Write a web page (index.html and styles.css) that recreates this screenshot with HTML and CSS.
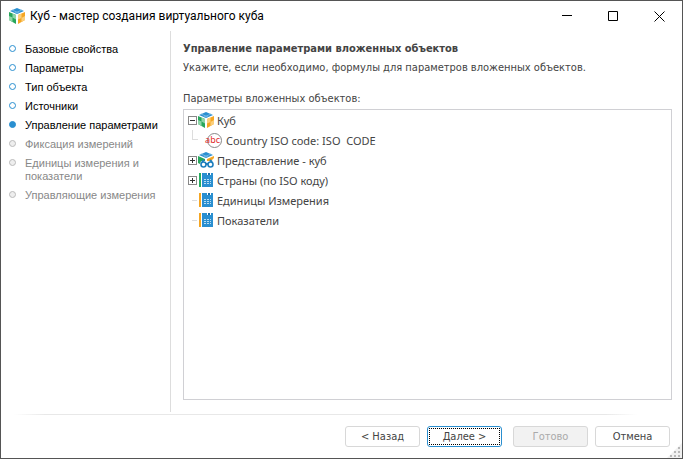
FILE: index.html
```html
<!DOCTYPE html>
<html lang="ru">
<head>
  <meta charset="UTF-8">
  <title>Куб - мастер создания виртуального куба</title>
  <link rel="stylesheet" href="styles.css">
</head>
<body>

  <!-- Общие значки -->
  <svg class="sprite" aria-hidden="true">
    <symbol id="cube" viewBox="0 0 16 16">
      <path d="M8 0L15 3L8 6L1 3Z" fill="#2a8fd0"/>
      <path d="M3 2L10 5M13 2L6 5" stroke="#6fb6e2" fill="none"/>
      <path d="M0 4L7 7V16L0 12Z" fill="#27a65a"/>
      <path d="M0 8L3.500 9.500V14L0 12ZM3.500 5.500L7 7V11.500L3.500 9.500Z" fill="#8fd6a8"/>
      <path d="M16 4L9 7V16L16 12Z" fill="#f5a623"/>
      <path d="M9 7L12.500 5.500V10L9 11.500ZM12.500 10L16 8V12L12.500 14Z" fill="#fbcf7c"/>
    </symbol>
    <symbol id="view" viewBox="0 0 16 16">
      <path d="M8 0L15 3L8 6L1 3Z" fill="#2a8fd0"/>
      <path d="M3 2L10 5M13 2L6 5" stroke="#6fb6e2" fill="none"/>
      <path d="M0 4L7 7V9H3L2 12L0 11Z" fill="#27a65a"/>
      <path d="M16 4L9 7V9H13L14 8L16 6Z" fill="#f5a623"/>
      <path d="M4 10L6 8M14 10L12 8M8 12H10" stroke="#1f7fbd" stroke-width="2" fill="none"/>
      <circle cx="5.500" cy="12.500" r="2.500" fill="#fff" stroke="#1f7fbd" stroke-width="1.600"/>
      <circle cx="12.500" cy="12.500" r="2.500" fill="#fff" stroke="#1f7fbd" stroke-width="1.600"/>
    </symbol>
    <symbol id="dict" viewBox="0 0 16 16">
      <path d="M1 1H3V15H1Z" fill="currentColor"/>
      <path d="M4 1H9V3H10V1H12V3H13V1H15V15H4Z" fill="#2a8fd0"/>
      <path d="M10 1H12V3H10Z" fill="#1c6fa8"/>
      <path d="M6 7.500H8M9 7.500H11M12 7.500H13M6 9.500H8M9 9.500H11M12 9.500H13M6 11.500H8M9 11.500H11M12 11.500H13" stroke="#b8dcf2" fill="none"/>
    </symbol>
  </svg>

  <div class="window">
    <header class="titlebar">
      <svg class="logo"><use href="#cube"/></svg>
      <h1>Куб - мастер создания виртуального куба</h1>
      <button class="win-btn" aria-label="Свернуть"><svg class="win-icon" viewBox="0 0 11 11"><path d="M0 4.500H10"/></svg></button>
      <button class="win-btn" aria-label="Развернуть"><svg class="win-icon" viewBox="0 0 11 11"><path d="M0.500 0.500H9.500V9.500H0.500Z"/></svg></button>
      <button class="win-btn" aria-label="Закрыть"><svg class="win-icon" viewBox="0 0 11 11"><path d="M0.500 0.500L10.500 10.500M10.500 0.500L0.500 10.500"/></svg></button>
    </header>

    <div class="content">
      <nav class="steps">
        <a href="#" class="step">Базовые свойства</a>
        <a href="#" class="step">Параметры</a>
        <a href="#" class="step">Тип объекта</a>
        <a href="#" class="step">Источники</a>
        <a href="#" class="step current" aria-current="step">Управление параметрами</a>
        <a class="step off">Фиксация измерений</a>
        <a class="step off">Единицы измерения и показатели</a>
        <a class="step off">Управляющие измерения</a>
      </nav>

      <main>
        <h2>Управление параметрами вложенных объектов</h2>
        <p class="hint">Укажите, если необходимо, формулы для параметров вложенных объектов.</p>
        <p class="caption" id="tree-label">Параметры вложенных объектов:</p>

        <ul class="tree" role="tree" aria-labelledby="tree-label">
          <li class="node" role="treeitem" aria-expanded="true">
            <button class="toggle" aria-label="Свернуть Куб"><svg viewBox="0 0 9 9"><path d="M2 4.500H7"/></svg></button>
            <svg class="icon"><use href="#cube"/></svg>
            <span>Куб</span>
          </li>
          <li class="node child" role="treeitem">
            <span class="elbow"></span>
            <span class="abc">abc</span>
            <span>Country ISO code: ISO&nbsp; CODE</span>
          </li>
          <li class="node" role="treeitem" aria-expanded="false">
            <button class="toggle" aria-label="Развернуть Представление"><svg viewBox="0 0 9 9"><path d="M2 4.500H7M4.500 2V7"/></svg></button>
            <svg class="icon"><use href="#view"/></svg>
            <span>Представление - куб</span>
          </li>
          <li class="node" role="treeitem" aria-expanded="false">
            <button class="toggle" aria-label="Развернуть Страны"><svg viewBox="0 0 9 9"><path d="M2 4.500H7M4.500 2V7"/></svg></button>
            <svg class="icon green"><use href="#dict"/></svg>
            <span>Страны (по ISO коду)</span>
          </li>
          <li class="node" role="treeitem">
            <span class="dash"></span>
            <svg class="icon orange"><use href="#dict"/></svg>
            <span>Единицы Измерения</span>
          </li>
          <li class="node" role="treeitem">
            <span class="dash"></span>
            <svg class="icon orange"><use href="#dict"/></svg>
            <span>Показатели</span>
          </li>
        </ul>
      </main>
    </div>

    <footer>
      <div class="line"></div>
      <div class="buttons">
        <button class="btn">&lt; Назад</button>
        <button class="btn primary"><span>Далее &gt;</span></button>
        <button class="btn finish" disabled>Готово</button>
        <button class="btn">Отмена</button>
      </div>
      <svg class="grip" viewBox="0 0 15 15">
        <path d="M15 0V15H0Z" fill="#f0f0f0"/>
        <path d="M11 4h2v2h-2zM7 8h2v2h-2zM11 8h2v2h-2zM3 12h2v2h-2zM7 12h2v2h-2zM11 12h2v2h-2z" fill="#b8b8b8"/>
      </svg>
    </footer>
  </div>

</body>
</html>
```

FILE: styles.css
```css
* {
  box-sizing: border-box;
}

body {
  margin: 0;
  font-family: "DejaVu Sans Condensed", "DejaVu Sans", sans-serif;
  font-size: 11px;
  color: #444;
  background: #fff;
}

h1, h2, p, ul {
  margin: 0;
  padding: 0;
}

button {
  font: inherit;
  color: inherit;
  padding: 0;
}

.sprite {
  display: none;
}

.window {
  display: flex;
  flex-direction: column;
  min-height: 100vh;
  border: 1px solid #555;
  position: relative;
}

/* Заголовок окна */
.titlebar {
  display: flex;
  align-items: center;
  height: 30px;
  padding-left: 8px;
}

.logo {
  width: 16px;
  height: 16px;
  margin-right: 5px;
}

.titlebar h1 {
  flex: 1;
  font-family: Roboto, sans-serif;
  font-size: 12px;
  font-weight: normal;
  color: #000;
}

.win-btn {
  display: flex;
  align-items: center;
  justify-content: center;
  width: 46px;
  height: 30px;
  border: none;
  background: none;
}

.win-icon {
  width: 11px;
  height: 11px;
  fill: none;
  stroke: #000;
}

.content {
  flex: 1;
  display: flex;
}

/* Шаги мастера */
.steps {
  display: flex;
  flex-direction: column;
  gap: 6px;
  width: 170px;
  padding: 12px 8px;
  border-right: 1px solid #ddd;
  font-family: "Liberation Sans", Arial, sans-serif;
  line-height: 13px;
}

.step {
  display: flex;
  gap: 9px;
  color: #000;
  text-decoration: none;
}

.step::before {
  content: "";
  box-sizing: border-box;
  flex: none;
  width: 7px;
  height: 7px;
  margin-top: 2px;
  border: 1px solid #2a8fd0;
  border-radius: 50%;
}

.current::before {
  background: #2a8fd0;
}

.off {
  color: #888;
}

.off::before {
  border-color: #bbb;
  background: #eee;
}

main {
  flex: 1;
  display: flex;
  flex-direction: column;
  padding: 8px 10px 12px 12px;
}

h2 {
  font-size: 11px;
  line-height: 20px;
}

.hint {
  line-height: 18px;
}

.caption {
  margin-top: 12px;
  line-height: 20px;
}

/* Дерево параметров */
.tree {
  flex: 1;
  padding: 0 4px;
  border: 1px solid #d0d0d4;
  list-style: none;
  font-family: "Noto Sans", sans-serif;
}

.node {
  display: flex;
  align-items: center;
  height: 20px;
}

.toggle {
  display: flex;
  width: 9px;
  height: 9px;
  border: 1px solid #888;
  background: #fff;
}

.toggle svg {
  flex: none;
  width: 9px;
  height: 9px;
  margin: -1px;
  stroke: #333;
}

.icon {
  width: 16px;
  height: 16px;
  margin: 0 3px 0 1px;
}

.green {
  color: #27ae60;
}

.orange {
  color: #f5a623;
}

.child {
  padding-left: 17px;
}

.elbow {
  width: 6px;
  height: 10px;
  margin: 0 0 10px -13px;
  border: solid #ddd;
  border-width: 0 0 1px 1px;
}

.abc {
  display: flex;
  justify-content: flex-end;
  width: 15px;
  height: 15px;
  margin: 0 4px 0 9px;
  padding-right: 1px;
  border: 1px solid #888;
  border-radius: 50%;
  font-size: 9px;
  line-height: 12px;
  color: #e02b2b;
}

.dash {
  width: 5px;
  height: 1px;
  margin: 0 0 0 4px;
  background: #ddd;
}

/* Нижняя панель */
footer {
  padding: 2px 12px 11px 13px;
}

.line {
  height: 1px;
  margin-right: 33px;
  background: linear-gradient(to right, #fff, #e8e8e8 5%, #e8e8e8 95%, #fff);
}

.buttons {
  display: flex;
  justify-content: flex-end;
  gap: 7px;
  margin-top: 11px;
}

.btn {
  width: 75px;
  height: 21px;
  border: 1px solid #d8d8d8;
  border-radius: 3px;
  background: #fff;
}

.primary {
  padding: 1px;
  border-color: #2a8fd0;
}

.primary span {
  display: block;
  border: 1px dotted #000;
  line-height: 15px;
}

.finish {
  margin-left: 4px;
  color: #aaa;
  background: #f2f2f2;
}

.grip {
  position: absolute;
  right: 0;
  bottom: 0;
  width: 15px;
  height: 15px;
}
```
